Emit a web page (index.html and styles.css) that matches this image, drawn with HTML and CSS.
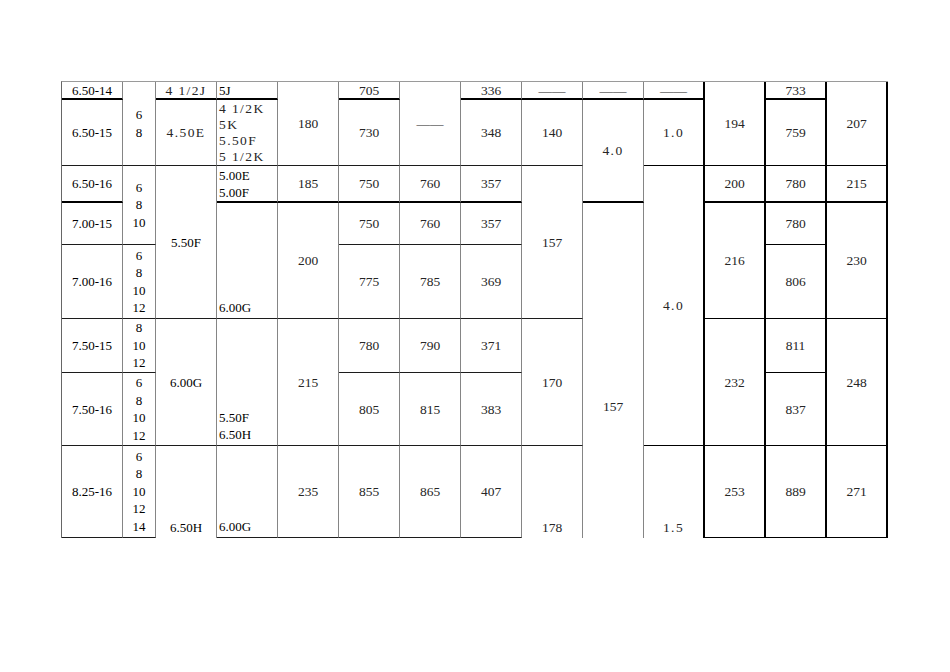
FILE: index.html
```html
<!DOCTYPE html>
<html>
<head>
<meta charset="utf-8">
<link rel="stylesheet" href="styles.css">
</head>
<body>
<div class="page">
  <div class="grid">
    <!-- row 0 -->
    <div class="c t bb2">6.50-14</div>
    <div class="c t rs2 ply">6<br>8</div>
    <div class="c m bb2">4 1/2J</div>
    <div class="c t lm bb2">5J</div>
    <div class="c s rs2">180</div>
    <div class="c s bb2">705</div>
    <div class="c s rs2">——</div>
    <div class="c s bb2">336</div>
    <div class="c s bb2">——</div>
    <div class="c s bb2">——</div>
    <div class="c s bb2 k">——</div>
    <div class="c s rs2 k">194</div>
    <div class="c s bb2 k">733</div>
    <div class="c s rs2 k">207</div>
    <!-- row 1 -->
    <div class="c t">6.50-15</div>
    <div class="c m">4.50E</div>
    <div class="c m lt">4 1/2K<br>5K<br>5.50F<br>5 1/2K</div>
    <div class="c s">730</div>
    <div class="c s">348</div>
    <div class="c s">140</div>
    <div class="c m rs2 bb2">4.0</div>
    <div class="c m k">1.0</div>
    <div class="c s k">759</div>
    <!-- row 2 -->
    <div class="c t bb2">6.50-16</div>
    <div class="c t rs2 ply">6<br>8<br>10</div>
    <div class="c t rs3">5.50F</div>
    <div class="c t lm bb2">5.00E<br>5.00F</div>
    <div class="c s bb2">185</div>
    <div class="c s bb2">750</div>
    <div class="c s bb2">760</div>
    <div class="c s bb2">357</div>
    <div class="c s rs3">157</div>
    <div class="c m rs5 k">4.0</div>
    <div class="c s bb2 k">200</div>
    <div class="c s bb2 k">780</div>
    <div class="c s bb2 k">215</div>
    <!-- row 3 -->
    <div class="c t">7.00-15</div>
    <div class="c t rs2 lb">6.00G</div>
    <div class="c s rs2">200</div>
    <div class="c s">750</div>
    <div class="c s">760</div>
    <div class="c s">357</div>
    <div class="c s rs5 low nb">157</div>
    <div class="c s rs2 k">216</div>
    <div class="c s k">780</div>
    <div class="c s rs2 k">230</div>
    <!-- row 4 -->
    <div class="c t">7.00-16</div>
    <div class="c t ply">6<br>8<br>10<br>12</div>
    <div class="c s">775</div>
    <div class="c s">785</div>
    <div class="c s">369</div>
    <div class="c s k">806</div>
    <!-- row 5 -->
    <div class="c t">7.50-15</div>
    <div class="c t ply">8<br>10<br>12</div>
    <div class="c t rs2">6.00G</div>
    <div class="c t rs2 lb">5.50F<br>6.50H</div>
    <div class="c s rs2">215</div>
    <div class="c s">780</div>
    <div class="c s">790</div>
    <div class="c s">371</div>
    <div class="c s rs2">170</div>
    <div class="c s rs2 k">232</div>
    <div class="c s k">811</div>
    <div class="c s rs2 k">248</div>
    <!-- row 6 -->
    <div class="c t">7.50-16</div>
    <div class="c t ply">6<br>8<br>10<br>12</div>
    <div class="c s">805</div>
    <div class="c s">815</div>
    <div class="c s">383</div>
    <div class="c s k">837</div>
    <!-- row 7 -->
    <div class="c t">8.25-16</div>
    <div class="c t ply">6<br>8<br>10<br>12<br>14</div>
    <div class="c t cb nb">6.50H</div>
    <div class="c t lb">6.00G</div>
    <div class="c s">235</div>
    <div class="c s">855</div>
    <div class="c s">865</div>
    <div class="c s">407</div>
    <div class="c s cb nb">178</div>
    <div class="c m cb nb k">1.5</div>
    <div class="c s k">253</div>
    <div class="c s k">889</div>
    <div class="c s k">271</div>
  </div>
</div>
</body>
</html>
```

FILE: styles.css
```css
* {
  box-sizing: border-box;
}

body {
  margin: 0;
  background: #ffffff;
}

.page {
  padding: 81px 0 0 61px;
}

.grid {
  display: grid;
  grid-template-columns: 61px 33px repeat(12, 61px);
  grid-template-rows: 18px 66px 37px 42px 74px 54px 73px 92px;
  width: max-content;
  border-left: 1px solid #666666;
  border-top: 1px solid #9a9a9a;
}

.c {
  display: flex;
  align-items: center;
  justify-content: center;
  text-align: center;
  border-right: 1px solid #858585;
  border-bottom: 1px solid #1c1c1c;
  font-family: "Liberation Serif", "Times New Roman", serif;
  font-size: 13px;
  line-height: 17px;
  color: #000000;
  overflow: hidden;
  white-space: nowrap;
}

.t {
  color: #000000;
}

.s {
  font-size: 13.5px;
  color: #262626;
}

.m {
  font-size: 13.5px;
  letter-spacing: 1.4px;
  color: #262626;
}

.ply {
  line-height: 17.5px;
}

.rs2 {
  grid-row: span 2;
}

.rs3 {
  grid-row: span 3;
}

.rs5 {
  grid-row: span 5;
}

.bb2 {
  border-bottom: 2px solid #000000;
}

.nb {
  border-bottom: none;
}

.k {
  border-right: 2px solid #000000;
  border-bottom-color: #000000;
}

.lm {
  justify-content: flex-start;
  text-align: left;
  padding-left: 2px;
}

.lt {
  justify-content: flex-start;
  align-items: flex-start;
  text-align: left;
  padding: 1px 0 0 2px;
  line-height: 16px;
}

.lb {
  justify-content: flex-start;
  align-items: flex-end;
  text-align: left;
  padding: 0 0 2px 2px;
}

.cb {
  align-items: flex-end;
  padding-bottom: 2px;
}

.low {
  padding-top: 72px;
}
```
